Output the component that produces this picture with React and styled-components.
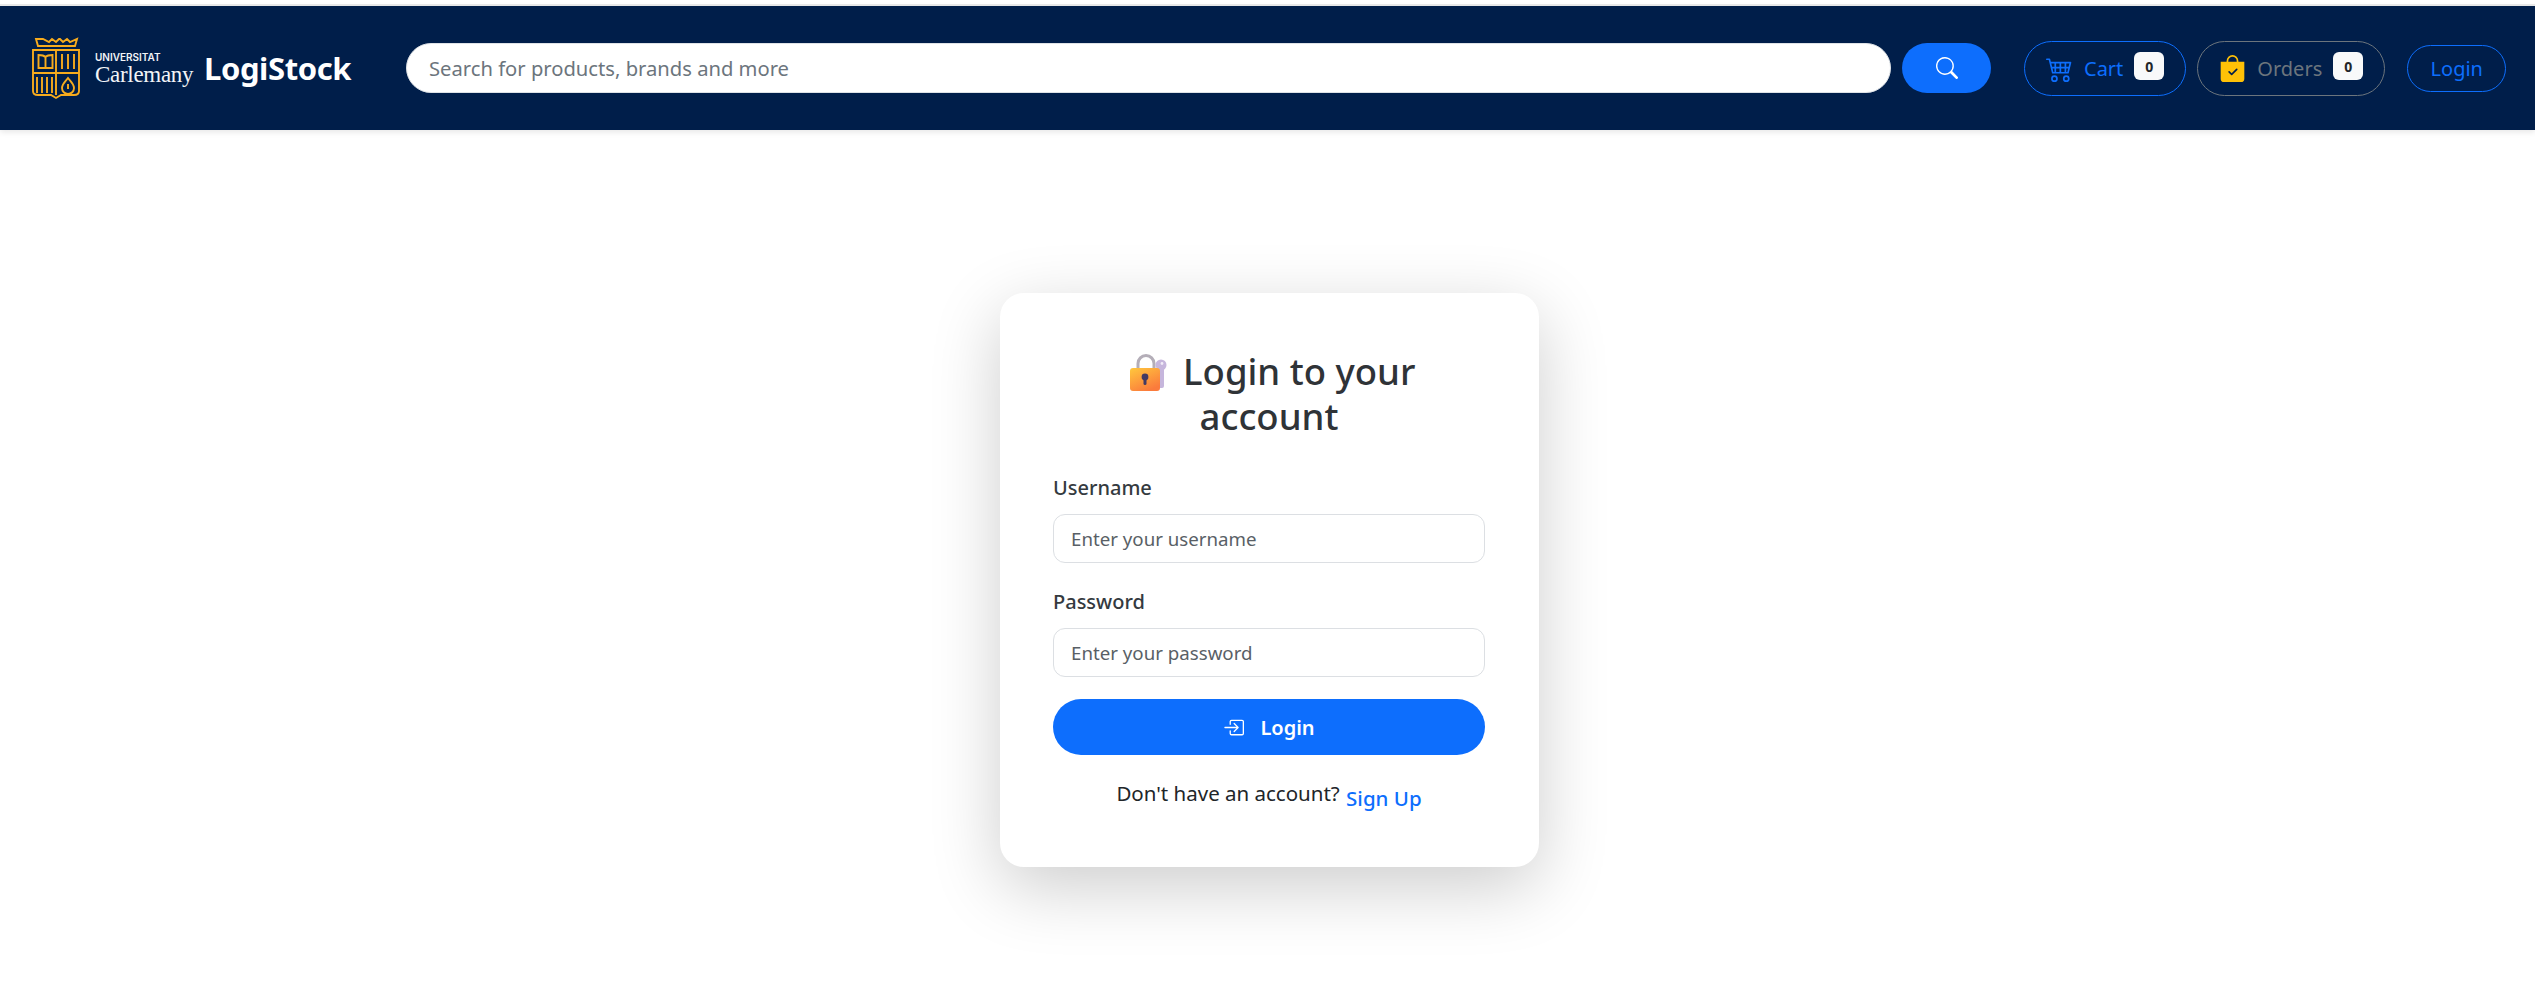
import styled, { createGlobalStyle } from "styled-components";
import { BsCart4, BsBagCheckFill, BsSearch, BsBoxArrowInRight } from "react-icons/bs";

const GlobalStyle = createGlobalStyle`
  html, body {
    margin: 0;
    padding: 0;
    background: #fff;
    font-family: "Noto Sans", "Open Sans", sans-serif;
  }
  * {
    box-sizing: border-box;
  }
`;

function Crest() {
  return (
    <CrestSvg viewBox="0 0 48 63" fill="none" stroke="#f7ab1d" strokeWidth="1.900">
      <path d="M4 2l2 7h37l2-7-7 3-3-3-4 3-3-3h-1l-3 3-4-3-3 3-6-3z" />
      <path d="M1 13h46v41c0 3-2 4-5 4H29l-5 3-5-3H6c-3 0-5-1-5-4z" />
      <path d="M24 13v45M1 36h46" />
      <path d="M13.500 20c-2-2-4-2-7-2v13h7M13.500 20c2-2 4-2 7-2v13h-7M13.500 20v11" />
      <path d="M30 17v15M36 17v15M42 17v15" />
      <path d="M5 40v16M10 40v16M15 40v16M20 40v16" />
      <path d="M36 41c3 4 6 6 6 10a6 6 0 0 1-12 0c0-4 3-6 6-10z" />
      <path d="M36 47v5" />
    </CrestSvg>
  );
}

function LockEmoji() {
  return (
    <EmojiSvg viewBox="0 0 37 37">
      <defs>
        <linearGradient id="lockBody" x1="0" y1="0" x2="0.6" y2="1">
          <stop offset="0" stopColor="#ffc83d" />
          <stop offset="1" stopColor="#fb7b3c" />
        </linearGradient>
      </defs>
      <path d="M8 15V9.500a8 8 0 0 1 16 0V15" fill="none" stroke="#b4aeb8" strokeWidth="3" />
      <circle cx="31" cy="11" r="5.500" fill="#c6b6dc" />
      <rect x="28" y="13" width="6" height="21" rx="2" fill="#c6b6dc" />
      <circle cx="32" cy="9.500" r="1.400" fill="#f1ecf7" />
      <rect x="0" y="14" width="30" height="23" rx="3" fill="url(#lockBody)" />
      <circle cx="15" cy="23" r="3.400" fill="#433a63" />
      <rect x="13.500" y="23" width="3" height="8" rx="1.500" fill="#433a63" />
    </EmojiSvg>
  );
}

export default function App() {
  return (
    <Page>
      <GlobalStyle />
      <Navbar>
        <Brand>
          <Crest />
          <BrandName>
            <span className="small">UNIVERSITAT</span>
            <span className="big">Carlemany</span>
          </BrandName>
          <AppName>LogiStock</AppName>
        </Brand>
        <SearchForm>
          <SearchInput placeholder="Search for products, brands and more" />
          <SearchButton>
            <BsSearch />
          </SearchButton>
        </SearchForm>
        <Actions>
          <NavPill $color="#0d6efd">
            <BsCart4 className="icon" />
            <span>Cart</span>
            <Badge>0</Badge>
          </NavPill>
          <NavPill $color="#6c757d">
            <BsBagCheckFill className="icon bag" />
            <span>Orders</span>
            <Badge>0</Badge>
          </NavPill>
          <LoginPill>Login</LoginPill>
        </Actions>
      </Navbar>
      <Main>
        <Card>
          <Title>
            <LockEmoji /> Login to your
            <br />
            account
          </Title>
          <Field>
            <Label>Username</Label>
            <Input placeholder="Enter your username" />
          </Field>
          <Field>
            <Label>Password</Label>
            <Input type="password" placeholder="Enter your password" />
          </Field>
          <SubmitButton>
            <BsBoxArrowInRight />
            <span>Login</span>
          </SubmitButton>
          <Footer>
            Don't have an account? <SignUp href="#">Sign Up</SignUp>
          </Footer>
        </Card>
      </Main>
    </Page>
  );
}

const Page = styled.div`
  min-height: 1002px;
  padding-top: 6px;
  overflow: hidden;
`;

const Navbar = styled.nav`
  height: 124px;
  background: #001e4a;
  box-shadow: 0 -2px 0 #e8e8e8, 0 2px 6px rgba(0, 0, 0, 0.1);
  display: flex;
  align-items: center;
  padding: 0 29px 0 32px;
`;

const Brand = styled.div`
  display: flex;
  align-items: center;
  width: 374px;
  flex-shrink: 0;
`;

const CrestSvg = styled.svg`
  width: 48px;
  height: 63px;
  margin-right: 15px;
  flex-shrink: 0;
`;

const BrandName = styled.div`
  display: flex;
  flex-direction: column;
  color: #f2f4f7;
  width: 109px;
  flex-shrink: 0;
  padding-top: 2px;

  .small {
    font-family: "Inter", sans-serif;
    font-size: 10px;
    line-height: 11px;
    font-weight: 600;
  }
  .big {
    font-family: "Liberation Serif", serif;
    font-size: 23px;
    line-height: 24px;
    letter-spacing: -0.3px;
  }
`;

const AppName = styled.div`
  color: #fff;
  font-size: 31px;
  font-weight: 700;
  letter-spacing: -0.4px;
`;

const SearchForm = styled.div`
  display: flex;
  align-items: center;
  gap: 11px;
  width: 1585px;
  flex-shrink: 0;
`;

const SearchInput = styled.input`
  flex: 1;
  height: 50px;
  border: 1px solid #dee2e6;
  border-radius: 25px;
  padding: 0 22px;
  font: 400 20.200px "Noto Sans", sans-serif;
  outline: none;

  &::placeholder {
    color: #6c757d;
    opacity: 1;
  }
`;

const SearchButton = styled.button`
  width: 89px;
  height: 50px;
  border: none;
  border-radius: 25px;
  background: #0d6efd;
  color: #fff;
  font-size: 22px;
  display: flex;
  align-items: center;
  justify-content: center;
`;

const Actions = styled.div`
  display: flex;
  align-items: center;
  margin-left: 33px;
`;

const NavPill = styled.div`
  height: 55px;
  border: 1.500px solid ${(p) => p.$color};
  border-radius: 28px;
  color: ${(p) => p.$color};
  font-size: 20px;
  display: flex;
  align-items: center;
  padding: 0 21px;
  margin-right: 11px;

  .icon {
    font-size: 27px;
    margin-right: 11px;
  }
  .bag {
    color: #ffc107;
  }
`;

const Badge = styled.span`
  width: 30px;
  height: 28px;
  margin-left: 11px;
  margin-bottom: 4px;
  border-radius: 6px;
  background: #f8f9fa;
  color: #212529;
  font-size: 14px;
  font-weight: 700;
  display: flex;
  align-items: center;
  justify-content: center;
`;

const LoginPill = styled.div`
  height: 47px;
  width: 99px;
  margin-left: 11px;
  border: 1.500px solid #0d6efd;
  border-radius: 24px;
  color: #0d6efd;
  font-size: 20px;
  display: flex;
  align-items: center;
  justify-content: center;
`;

const Main = styled.main`
  display: flex;
  justify-content: center;
  padding: 163px 0 0 4px;
`;

const Card = styled.div`
  width: 539px;
  height: 574px;
  padding: 56px 54px 0 53px;
  background: #fff;
  border-radius: 24px;
  box-shadow: 0 20px 70px rgba(0, 0, 0, 0.2);
`;

const EmojiSvg = styled.svg`
  width: 37px;
  height: 37px;
  margin: 0 7px 0 7px;
  vertical-align: -6px;
`;

const Title = styled.h2`
  margin: 0 0 36px;
  text-align: center;
  color: #2f3337;
  font-size: 36.500px;
  font-weight: 500;
  line-height: 45px;
`;

const Field = styled.div`
  margin-bottom: 26px;

  & + & {
    margin-bottom: 22px;
  }
`;

const Label = styled.label`
  display: block;
  margin-bottom: 13px;
  color: #343a40;
  font-size: 20px;
  font-weight: 500;
  line-height: 26px;
`;

const Input = styled.input`
  display: block;
  width: 100%;
  height: 49px;
  padding: 0 17px;
  border: 1px solid #dcdfe3;
  border-radius: 12px;
  font: 400 18.700px "Noto Sans", sans-serif;
  outline: none;

  &::placeholder {
    color: #595f66;
    opacity: 1;
  }
`;

const SubmitButton = styled.button`
  width: 100%;
  height: 56px;
  border: none;
  border-radius: 28px;
  background: #0d6efd;
  color: #fff;
  font: 600 20px "Noto Sans", sans-serif;
  display: flex;
  align-items: center;
  justify-content: center;
  gap: 16px;

  svg {
    font-size: 21px;
  }
`;

const Footer = styled.p`
  margin: 24px 0 0;
  text-align: center;
  color: #212529;
  font-size: 20.500px;
  line-height: 28px;
`;

const SignUp = styled.a`
  display: inline-block;
  vertical-align: -5px;
  margin-left: 1px;
  color: #0d6efd;
  font-weight: 500;
  text-decoration: none;
`;
